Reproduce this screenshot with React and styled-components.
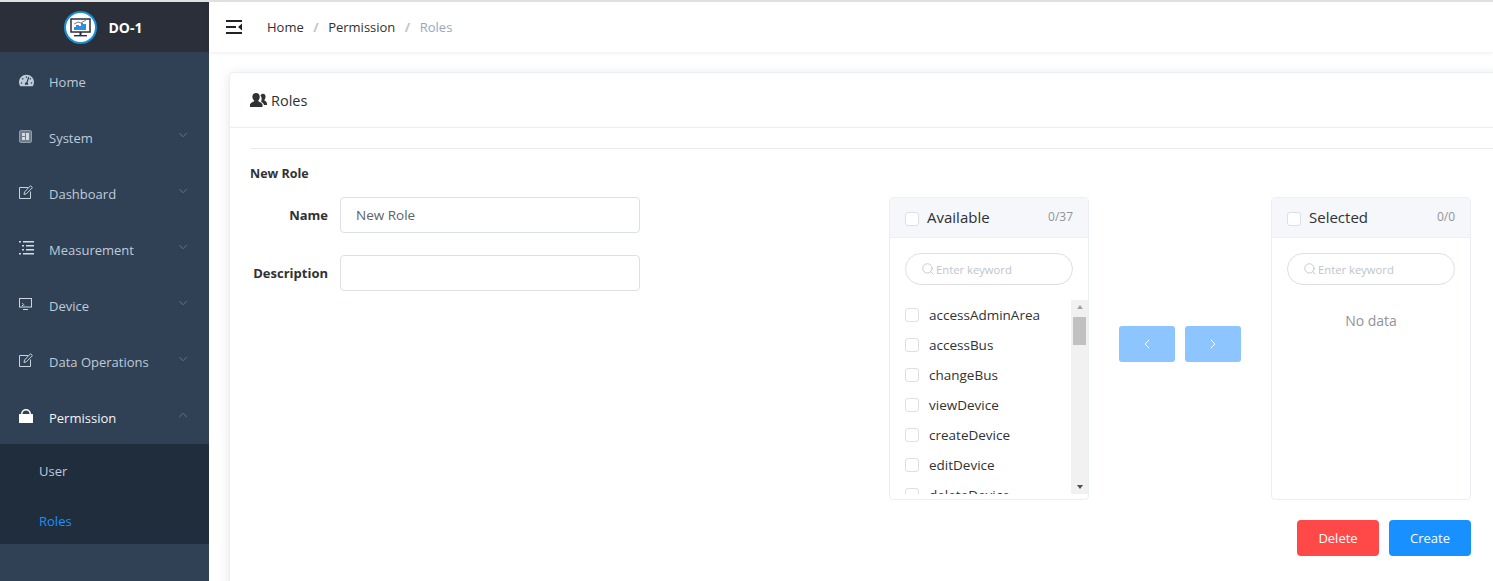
import React from 'react'
import styled, { createGlobalStyle } from 'styled-components'
import { FaTachometerAlt } from 'react-icons/fa'
import { ChevronDown, ChevronUp, ChevronLeft, ChevronRight, Search } from 'lucide-react'

const GlobalStyle = createGlobalStyle`
  html, body {
    margin: 0;
    height: 100%;
    overflow: hidden;
    font-family: "Open Sans", "Noto Sans", sans-serif;
    background: #fff;
  }
  #root { height: 100%; }
  * { box-sizing: border-box; }
`

const Page = styled.div`
  height: 581px;
  display: flex;
  border-top: 2px solid #e0e0e0;
  overflow: hidden;
`

const Sidebar = styled.aside`
  width: 209px;
  flex-shrink: 0;
  background: #304156;
  display: flex;
  flex-direction: column;
`

const Logo = styled.div`
  height: 50px;
  background: #2b2f3a;
  display: flex;
  align-items: center;
  justify-content: center;
  gap: 11px;
  padding-right: 2px;
  color: #fff;
  font-size: 14px;
  font-weight: 700;
  flex-shrink: 0;
`

const MenuItem = styled.div`
  height: 56px;
  flex-shrink: 0;
  display: flex;
  align-items: center;
  padding: 4px 20px 0 19px;
  font-size: 13px;
  color: ${p => (p.$open ? '#f4f4f5' : '#bfcbd9')};
`

const MenuIcon = styled.span`
  width: 30px;
  height: 16px;
  display: flex;
  align-items: center;
  margin-top: -4px;
  color: ${p => (p.$open ? '#fff' : '#bfcbd9')};
`

const MenuLabel = styled.span`
  flex: 1;
`

const Arrow = styled.span`
  display: flex;
  color: #909399;
  margin-top: -6px;
  margin-right: -1px;
`

const SubMenu = styled.div`
  background: #1f2d3d;
  display: flex;
  flex-direction: column;
`

const SubItem = styled.div`
  height: 50px;
  display: flex;
  align-items: center;
  padding: 4px 0 0 39px;
  font-size: 13px;
  color: ${p => (p.$active ? '#1890ff' : '#bfcbd9')};
`

const Main = styled.main`
  flex: 1;
  min-width: 0;
  display: flex;
  flex-direction: column;
  background: #fff;
`

const Navbar = styled.header`
  height: 50px;
  flex-shrink: 0;
  display: flex;
  align-items: center;
  padding-left: 17px;
  box-shadow: 0 1px 4px rgba(0, 21, 41, 0.08);
`

const Crumbs = styled.nav`
  display: flex;
  align-items: center;
  margin-left: 25px;
  font-size: 13px;
  color: #303133;
`

const Sep = styled.span`
  margin: 0 9.5px;
  color: #c0c4cc;
  font-weight: 700;
`

const LastCrumb = styled.span`
  color: #97a8be;
`

const Content = styled.div`
  flex: 1;
  padding: 20px 0 0 20px;
  min-height: 0;
`

const Card = styled.section`
  width: 1284px;
  height: 560px;
  background: #fff;
  border: 1px solid #ebeef5;
  border-radius: 4px;
  box-shadow: 0 2px 12px rgba(0, 0, 0, 0.1);
`

const CardHeader = styled.div`
  height: 55px;
  padding: 0 20px;
  display: flex;
  align-items: center;
  gap: 4px;
  font-size: 14.5px;
  color: #303133;
  border-bottom: 1px solid #ebeef5;
`

const CardBody = styled.div`
  padding: 20px 21px 0 20px;
`

const Divider = styled.div`
  height: 1px;
  background: #e8eaf3;
  margin: 0 -21px 16px 0;
`

const SectionTitle = styled.div`
  font-size: 12.5px;
  font-weight: 700;
  color: #303133;
  line-height: 18px;
  margin-bottom: 14px;
`

const FormRow = styled.div`
  display: flex;
  justify-content: space-between;
  padding-right: 20px;
`

const Form = styled.div`
  display: flex;
  flex-direction: column;
  gap: 22px;
`

const Field = styled.label`
  display: flex;
  align-items: center;
`

const FieldLabel = styled.span`
  width: 78px;
  margin-right: 12px;
  text-align: right;
  font-size: 13px;
  font-weight: 700;
  color: #303133;
  white-space: nowrap;
`

const TextInput = styled.input`
  width: 300px;
  height: 36px;
  padding: 0 15px;
  border: 1px solid #dcdfe6;
  border-radius: 4px;
  font: inherit;
  font-size: 13.5px;
  color: #606266;
  outline: none;
`

const Transfer = styled.div`
  display: flex;
  align-items: flex-start;
`

const Panel = styled.div`
  width: 200px;
  height: 303px;
  border: 1px solid #ebeef5;
  border-radius: 4px;
  overflow: hidden;
  background: #fff;
`

const PanelHead = styled.div`
  height: 40px;
  padding: 0 15px;
  display: flex;
  align-items: center;
  background: #f5f7fa;
  border-bottom: 1px solid #ebeef5;
  font-size: 15px;
  color: #303133;
`

const Check = styled.span`
  width: 14px;
  height: 14px;
  flex-shrink: 0;
  border: 1px solid #dcdfe6;
  border-radius: 3px;
  background: #fff;
  margin-top: ${p => (p.$head ? '3px' : '0')};
`

const HeadTitle = styled.span`
  flex: 1;
  margin: -2px 0 0 8px;
`

const Count = styled.span`
  font-size: 12px;
  color: #909399;
  margin-top: -3px;
`

const SearchBox = styled.div`
  margin: 15px 15px 0;
  height: 32px;
  border: 1px solid #dcdfe6;
  border-radius: 16px;
  display: flex;
  align-items: center;
  gap: 1px;
  padding-left: 15px;
  font-size: 11.25px;
  color: #c0c4cc;
`

const ListWrap = styled.div`
  margin-top: 15px;
  height: 194px;
  display: flex;
`

const List = styled.div`
  flex: 1;
  overflow: hidden;
`

const Row = styled.div`
  height: 30px;
  padding-left: 15px;
  display: flex;
  align-items: center;
  gap: 10px;
  font-size: 13.5px;
  color: #303133;
`

const Scrollbar = styled.div`
  width: 17px;
  background: #f1f1f1;
  display: flex;
  flex-direction: column;
  align-items: center;
  justify-content: space-between;
  padding: 5px 0;
  position: relative;
`

const Thumb = styled.div`
  position: absolute;
  top: 17px;
  left: 2px;
  width: 13px;
  height: 28px;
  background: #c1c1c1;
`

const Tri = styled.span`
  width: 0;
  height: 0;
  border-left: 3.5px solid transparent;
  border-right: 3.5px solid transparent;
  border-${p => (p.$up ? 'bottom' : 'top')}: 4px solid ${p => (p.$up ? '#a3a3a3' : '#505050')};
`

const Empty = styled.div`
  margin-top: 26px;
  text-align: center;
  font-size: 14px;
  color: #909399;
`

const Moves = styled.div`
  width: 182px;
  height: 303px;
  display: flex;
  justify-content: center;
  gap: 10px;
  padding-top: 129px;
`

const MoveBtn = styled.div`
  width: 56px;
  height: 36px;
  border-radius: 3px;
  background: #8cc5ff;
  color: #fff;
  display: flex;
  align-items: center;
  justify-content: center;
`

const Actions = styled.div`
  display: flex;
  justify-content: flex-end;
  gap: 10px;
  margin-top: 20px;
  padding-right: 20px;
`

const ActionBtn = styled.button`
  width: 82px;
  height: 36px;
  border: 0;
  border-radius: 4px;
  background: ${p => (p.$danger ? '#ff4949' : '#1890ff')};
  color: #fff;
  font: inherit;
  font-size: 13px;
`

const menu = [
  { label: 'Home', icon: <FaTachometerAlt size={15} /> },
  { label: 'System', arrow: true, icon: <ChipIcon /> },
  { label: 'Dashboard', arrow: true, icon: <EditIcon /> },
  { label: 'Measurement', arrow: true, icon: <ListIcon /> },
  { label: 'Device', arrow: true, icon: <CastIcon /> },
  { label: 'Data Operations', arrow: true, icon: <EditIcon /> },
]

const perms = ['accessAdminArea', 'accessBus', 'changeBus', 'viewDevice', 'createDevice', 'editDevice', 'deleteDevice']

function ChipIcon() {
  return (
    <svg width="13" height="13" viewBox="0 0 13 13">
      <rect x="0.5" y="0.5" width="12" height="12" rx="1.5" fill="#6f7c8c" stroke="#8f9baa" />
      <rect x="3" y="3" width="3" height="3" fill="#d3dae2" />
      <rect x="3" y="7" width="3" height="3" fill="#d3dae2" />
      <rect x="7" y="3" width="3" height="7" fill="#d3dae2" />
    </svg>
  )
}

function EditIcon() {
  return (
    <svg width="14" height="14" viewBox="0 0 14 14" fill="none" stroke="#c9d3de" strokeWidth="1">
      <path d="M9 2.500H.5v11h11V6.500" />
      <path d="M5 9.500l.5-2.500L11.500.8l2 1.800-6 6z" />
    </svg>
  )
}

function LockIcon() {
  return (
    <svg width="14" height="14" viewBox="0 0 14 14" fill="#fff">
      <rect x="0" y="5" width="14" height="9" rx="0.5" />
      <path d="M2 6V5a5 5 0 0 1 10 0v1h-1.500V5a3.500 3.500 0 0 0-7 0v1z" />
    </svg>
  )
}

function ListIcon() {
  return (
    <svg width="15" height="14" viewBox="0 0 15 14" fill="#d5dde6">
      <rect x="0" y="0" width="2" height="1.5" />
      <rect x="4" y="0" width="11" height="1.5" />
      <rect x="3" y="4" width="2" height="1.5" />
      <rect x="7" y="4" width="8" height="1.5" />
      <rect x="3" y="8" width="2" height="1.5" />
      <rect x="7" y="8" width="8" height="1.5" />
      <rect x="0" y="12" width="2" height="1.5" />
      <rect x="4" y="12" width="11" height="1.5" />
    </svg>
  )
}

function CastIcon() {
  return (
    <svg width="13" height="12" viewBox="0 0 13 12" fill="none" stroke="#cdd6e0">
      <rect x="0.5" y="0.5" width="12" height="8.5" />
      <path d="M4 11.500h5" />
      <path d="M3 7.500h1M3 5.500c1 0 2 1 2 2" />
    </svg>
  )
}

function LogoIcon() {
  return (
    <svg width="33" height="33" viewBox="0 0 33 33">
      <circle cx="16.5" cy="16.5" r="15.5" fill="#fff" stroke="#1890d8" strokeWidth="2" />
      <rect x="7" y="8" width="19" height="13" fill="#fff" stroke="#2b2f3a" strokeWidth="1.5" />
      <path d="M10 19v-3h2v-2h3v1h2v-3h2v1h3v6z" fill="#2f8fdc" />
      <path d="M10 13l4-2 3 1 5-3" fill="none" stroke="#555" strokeWidth="0.8" />
      <rect x="15.5" y="21" width="2" height="3" fill="#2b2f3a" />
      <rect x="10" y="24" width="13" height="1.4" fill="#2b2f3a" />
    </svg>
  )
}

function Hamburger() {
  return (
    <svg width="16" height="14" viewBox="0 0 16 14" fill="#222">
      <rect x="0" y="0" width="16" height="2" />
      <rect x="0" y="6" width="10" height="2" />
      <rect x="0" y="12" width="16" height="2" />
      <path d="M16 3.500v7l-4-3.500z" />
    </svg>
  )
}

function UsersIcon() {
  return (
    <svg width="17" height="16" viewBox="0 0 17 16" fill="#303133">
      <path d="M10.500 3.500c1-2.500 4.500-2.500 5 .5.2 1.500-.3 3-1.200 4 .2 1 2.700 1.300 2.700 3.500v1.500h-3c-.4-2-2-2.500-3-3.500 1-1.500 1-4-.5-6z" />
      <path d="M6 1c2.500 0 4 2 3.700 4.500-.2 1.300-.7 2.500-1.500 3.200 0 1.300 4.300 1.500 4.300 4.300v2H0v-2c0-2.800 4.300-3 4.300-4.300C3.500 8 2.500 6.800 2.400 5 2.200 2.800 3.700 1 6 1z" />
    </svg>
  )
}

function TransferPanel({ title, count, children }) {
  return (
    <Panel>
      <PanelHead>
        <Check $head />
        <HeadTitle>{title}</HeadTitle>
        <Count>{count}</Count>
      </PanelHead>
      <SearchBox>
        <Search size={14} strokeWidth={1.5} />
        Enter keyword
      </SearchBox>
      {children}
    </Panel>
  )
}

export default function App() {
  return (
    <Page>
      <GlobalStyle />
      <Sidebar>
        <Logo>
          <LogoIcon />
          DO-1
        </Logo>
        {menu.map(m => (
          <MenuItem key={m.label}>
            <MenuIcon>{m.icon}</MenuIcon>
            <MenuLabel>{m.label}</MenuLabel>
            {m.arrow && <Arrow><ChevronDown size={14} strokeWidth={1} /></Arrow>}
          </MenuItem>
        ))}
        <MenuItem $open>
          <MenuIcon $open><LockIcon /></MenuIcon>
          <MenuLabel>Permission</MenuLabel>
          <Arrow><ChevronUp size={14} strokeWidth={1} /></Arrow>
        </MenuItem>
        <SubMenu>
          <SubItem>User</SubItem>
          <SubItem $active>Roles</SubItem>
        </SubMenu>
      </Sidebar>
      <Main>
        <Navbar>
          <Hamburger />
          <Crumbs>
            Home<Sep>/</Sep>Permission<Sep>/</Sep><LastCrumb>Roles</LastCrumb>
          </Crumbs>
        </Navbar>
        <Content>
          <Card>
            <CardHeader>
              <UsersIcon />
              Roles
            </CardHeader>
            <CardBody>
              <Divider />
              <SectionTitle>New Role</SectionTitle>
              <FormRow>
                <Form>
                  <Field>
                    <FieldLabel>Name</FieldLabel>
                    <TextInput defaultValue="New Role" />
                  </Field>
                  <Field>
                    <FieldLabel>Description</FieldLabel>
                    <TextInput />
                  </Field>
                </Form>
                <Transfer>
                  <TransferPanel title="Available" count="0/37">
                    <ListWrap>
                      <List>
                        {perms.map(p => (
                          <Row key={p}><Check />{p}</Row>
                        ))}
                      </List>
                      <Scrollbar>
                        <Tri $up />
                        <Thumb />
                        <Tri />
                      </Scrollbar>
                    </ListWrap>
                  </TransferPanel>
                  <Moves>
                    <MoveBtn><ChevronLeft size={16} strokeWidth={1.5} /></MoveBtn>
                    <MoveBtn><ChevronRight size={16} strokeWidth={1.5} /></MoveBtn>
                  </Moves>
                  <TransferPanel title="Selected" count="0/0">
                    <Empty>No data</Empty>
                  </TransferPanel>
                </Transfer>
              </FormRow>
              <Actions>
                <ActionBtn $danger>Delete</ActionBtn>
                <ActionBtn>Create</ActionBtn>
              </Actions>
            </CardBody>
          </Card>
        </Content>
      </Main>
    </Page>
  )
}
